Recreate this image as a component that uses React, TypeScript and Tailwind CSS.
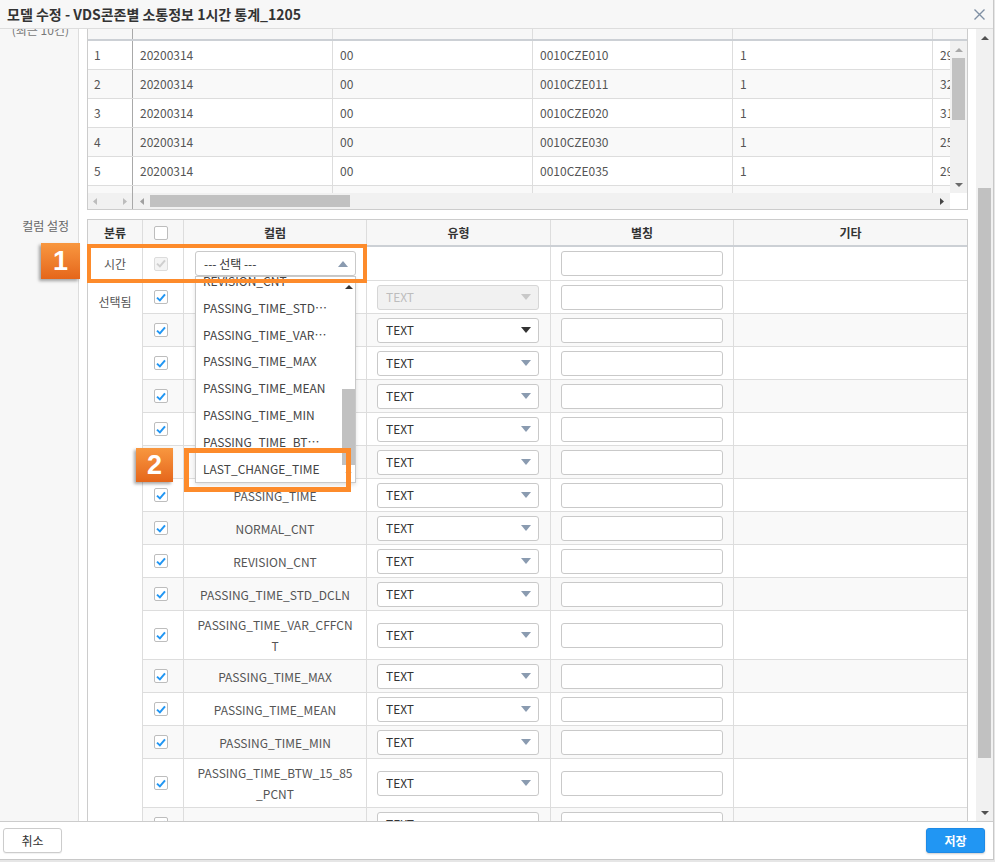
import React from "react";

function Tri({ dir, color, w = 10, h = 6 }: { dir: "up" | "down" | "left" | "right"; color: string; w?: number; h?: number }) {
  let pts = "";
  if (dir === "down") pts = `0,0 ${w},0 ${w / 2},${h}`;
  if (dir === "up") pts = `0,${h} ${w},${h} ${w / 2},0`;
  if (dir === "left") pts = `${w},0 ${w},${h} 0,${h / 2}`;
  if (dir === "right") pts = `0,0 0,${h} ${w},${h / 2}`;
  return (
    <svg width={w} height={h} viewBox={`0 0 ${w} ${h}`} className="block shrink-0">
      <polygon points={pts} fill={color} />
    </svg>
  );
}

function Check({ checked = true, disabled = false }: { checked?: boolean; disabled?: boolean }) {
  return (
    <div
      className={`w-[14px] h-[14px] rounded-[2px] border flex items-center justify-center ${
        disabled ? "border-[#dcdcdc] bg-[#f4f4f4]" : "border-[#bdbdbd] bg-white"
      }`}
    >
      {checked && (
        <svg width="10" height="9" viewBox="0 0 10 9" className="block">
          <path d="M1 4.6 L3.9 7.4 L9 1.4" fill="none" stroke={disabled ? "#cfcfcf" : "#2196f3"} strokeWidth="2" />
        </svg>
      )}
    </div>
  );
}

function TypeSelect({ variant }: { variant: "disabled" | "dark" | "normal" }) {
  const dis = variant === "disabled";
  return (
    <div
      className={`ml-[10px] w-[162px] h-[25px] rounded-[3px] border flex items-center justify-between pl-[8px] pr-[7px] ${
        dis ? "bg-[#f1f1f1] border-[#d6d6d6] text-[#bdbdbd]" : "bg-white border-[#c9c9c9] text-[#333]"
      }`}
    >
      <span>TEXT</span>
      <Tri dir="down" color={dis ? "#c8c8c8" : variant === "dark" ? "#333" : "#8a9bb0"} />
    </div>
  );
}

function Input() {
  return <div className="ml-[10px] w-[162px] h-[25px] rounded-[3px] border border-[#c9c9c9] bg-white" />;
}

const upperRows = [
  ["1", "20200314", "00", "0010CZE010", "1", "2950"],
  ["2", "20200314", "00", "0010CZE011", "1", "3210"],
  ["3", "20200314", "00", "0010CZE020", "1", "3150"],
  ["4", "20200314", "00", "0010CZE030", "1", "2580"],
  ["5", "20200314", "00", "0010CZE035", "1", "2960"],
  ["6", "20200314", "00", "0010CZE040", "1", "2710"],
];

const upperHead = ["순번", "STAT_DATE", "STAT_HOUR", "CONZONE_ID", "ROAD_DRCT_SE_CD_YN", "VOLUME"];

function UpperGrid() {
  return (
    <div className="w-[881px] h-[200px] border border-[#cccccc] bg-white flex flex-col">
      <div className="h-[30px] shrink-0 border-b-2 border-[#ccd0d5] bg-[#f7f7f7] flex overflow-hidden font-bold text-[#333]">
        <div className="w-[45px] shrink-0 border-r border-[#a9a9a9] flex items-center justify-center pb-[6px]">{upperHead[0]}</div>
        {upperHead.slice(1).map((h, i) => (
          <div key={i} className="w-[200px] shrink-0 border-r border-[#dddddd] flex items-center justify-center whitespace-nowrap pb-[6px]">
            {h}
          </div>
        ))}
      </div>
      <div className="h-[152px] shrink-0 flex">
        <div className="w-[862px] shrink-0 overflow-hidden">
          {upperRows.map((r, i) => (
            <div key={i} className={`h-[29px] flex border-b border-[#dddddd] ${i % 2 === 1 ? "bg-[#f9f9f9]" : "bg-white"}`}>
              <div className="w-[45px] shrink-0 border-r border-[#a9a9a9] pl-[6px] flex items-center">{r[0]}</div>
              {r.slice(1).map((c, j) => (
                <div key={j} className="w-[200px] shrink-0 border-r border-[#dddddd] pl-[7px] flex items-center whitespace-nowrap">
                  {c}
                </div>
              ))}
            </div>
          ))}
        </div>
        <div className="w-[17px] shrink-0 bg-[#f1f1f1] flex flex-col">
          <div className="h-[17px] flex items-center justify-center">
            <Tri dir="up" color="#a8a8a8" w={8} h={4} />
          </div>
          <div className="ml-[2px] w-[13px] h-[62px] bg-[#c1c1c1]" />
          <div className="flex-1" />
          <div className="h-[17px] flex items-center justify-center">
            <Tri dir="down" color="#6b6b6b" w={8} h={4} />
          </div>
        </div>
      </div>
      <div className="h-[16px] shrink-0 flex">
        <div className="w-[45px] shrink-0 bg-[#f1f1f1] border-r border-[#a9a9a9] flex items-center justify-between px-[5px]">
          <Tri dir="left" color="#bdbdbd" w={4} h={7} />
          <Tri dir="right" color="#bdbdbd" w={4} h={7} />
        </div>
        <div className="w-[817px] shrink-0 bg-[#f1f1f1] flex items-center">
          <div className="w-[17px] flex items-center justify-center">
            <Tri dir="left" color="#a0a0a0" w={4} h={7} />
          </div>
          <div className="w-[200px] h-[12px] bg-[#c1c1c1]" />
          <div className="flex-1" />
          <div className="w-[17px] flex items-center justify-center">
            <Tri dir="right" color="#444" w={4} h={7} />
          </div>
        </div>
        <div className="w-[17px] shrink-0 bg-white" />
      </div>
    </div>
  );
}

type LRow = { name: string[]; tall?: boolean; type?: "disabled" | "dark" | "normal" };
const lowerRows: LRow[] = [
  { name: ["STAT_DATE"], type: "disabled" },
  { name: ["STAT_HOUR"], type: "dark" },
  { name: ["VDS_ZONE_ID"] },
  { name: ["LANE_NO"] },
  { name: ["TRAFFIC_QTY"] },
  { name: ["AVG_SPEED"] },
  { name: ["PASSING_TIME"] },
  { name: ["NORMAL_CNT"] },
  { name: ["REVISION_CNT"] },
  { name: ["PASSING_TIME_STD_DCLN"] },
  { name: ["PASSING_TIME_VAR_CFFCN", "T"], tall: true },
  { name: ["PASSING_TIME_MAX"] },
  { name: ["PASSING_TIME_MEAN"] },
  { name: ["PASSING_TIME_MIN"] },
  { name: ["PASSING_TIME_BTW_15_85", "_PCNT"], tall: true },
  { name: ["LAST_CHANGE_TIME"] },
  { name: ["STAT_WEEK"] },
];

const listItems = [
  "REVISION_CNT",
  "PASSING_TIME_STD_DCLN",
  "PASSING_TIME_VAR_CFFCNT",
  "PASSING_TIME_MAX",
  "PASSING_TIME_MEAN",
  "PASSING_TIME_MIN",
  "PASSING_TIME_BTW_15_85_PCNT",
  "LAST_CHANGE_TIME",
];

function OpenSelect() {
  return (
    <div className="relative ml-[11px] w-[161px] h-[25px]">
      <div className="h-full border border-[#c9c9c9] rounded-[3px] bg-white flex items-center justify-between pl-[8px] pr-[7px] text-[#333]">
        <span>--- 선택 ---</span>
        <Tri dir="up" color="#8a9bb0" />
      </div>
      <div className="absolute left-0 top-full w-[161px] h-[207px] border border-[#c9c9c9] bg-white z-10 overflow-hidden shadow-[0_2px_4px_rgba(0,0,0,0.12)]">
        <div className="-mt-[9px] pr-[13px]">
          {listItems.map((t, i) => (
            <div key={i} className="h-[26.8px] leading-[26.8px] pl-[7px] pr-[13px] truncate text-[#444]">
              {t}
            </div>
          ))}
        </div>
        <div className="absolute right-0 top-0 bottom-0 w-[13px] flex flex-col items-center bg-white">
          <div className="h-[19px] flex items-center justify-center">
            <Tri dir="up" color="#333" w={8} h={4} />
          </div>
          <div className="mt-[93px] w-[13px] h-[76px] bg-[#c1c1c1]" />
          <div className="flex-1 flex items-center justify-center">
            <Tri dir="down" color="#c8c8c8" w={7} h={4} />
          </div>
        </div>
      </div>
    </div>
  );
}

function LowerGrid() {
  return (
    <div className="w-[881px] border border-[#cccccc] bg-white">
      <div className="h-[27px] border-b-2 border-[#ccd0d5] bg-[#f7f7f7] flex font-bold text-[#333]">
        <div className="w-[55px] shrink-0 border-r border-[#dddddd] flex items-center justify-center">분류</div>
        <div className="w-[41px] shrink-0 border-r border-[#dddddd] flex items-center pl-[11px]">
          <Check checked={false} />
        </div>
        <div className="w-[183px] shrink-0 border-r border-[#dddddd] flex items-center justify-center">컬럼</div>
        <div className="w-[184px] shrink-0 border-r border-[#dddddd] flex items-center justify-center">유형</div>
        <div className="w-[183px] shrink-0 border-r border-[#dddddd] flex items-center justify-center">별칭</div>
        <div className="flex-1 flex items-center justify-center">기타</div>
      </div>
      <div className="h-[34px] border-b border-[#dddddd] flex">
        <div className="w-[55px] shrink-0 border-r border-[#dddddd] flex items-center justify-center">시간</div>
        <div className="w-[41px] shrink-0 border-r border-[#dddddd] flex items-center pl-[11px]">
          <Check disabled />
        </div>
        <div className="w-[183px] shrink-0 border-r border-[#dddddd] pt-[4px]">
          <OpenSelect />
        </div>
        <div className="w-[184px] shrink-0 border-r border-[#dddddd]" />
        <div className="w-[183px] shrink-0 border-r border-[#dddddd] pt-[4px]">
          <Input />
        </div>
        <div className="flex-1" />
      </div>
      <div className="flex">
        <div className="w-[55px] shrink-0 border-r border-[#dddddd] text-center pt-[10px] leading-[21px]">선택됨</div>
        <div className="flex-1">
          {lowerRows.map((r, i) => (
            <div
              key={i}
              className={`flex border-b border-[#dddddd] ${r.tall ? "h-[49px]" : "h-[33px]"} ${
                i % 2 === 1 ? "bg-[#f9f9f9]" : "bg-white"
              }`}
            >
              <div className="w-[41px] shrink-0 border-r border-[#dddddd] flex items-center pl-[11px]">
                <Check />
              </div>
              <div className="w-[183px] shrink-0 border-r border-[#dddddd] flex flex-col items-center justify-center leading-[21px] whitespace-nowrap">
                {r.name.map((n, j) => (
                  <div key={j}>{n}</div>
                ))}
              </div>
              <div className="w-[184px] shrink-0 border-r border-[#dddddd] flex items-center">
                <TypeSelect variant={r.type ?? "normal"} />
              </div>
              <div className="w-[183px] shrink-0 border-r border-[#dddddd] flex items-center">
                <Input />
              </div>
              <div className="flex-1" />
            </div>
          ))}
        </div>
      </div>
    </div>
  );
}

export default function App() {
  return (
    <div className="relative w-[995px] h-[862px] bg-[#e6e6e6] overflow-hidden font-['Noto_Sans_CJK_KR',sans-serif] text-[12px] text-[#555]">
      <div className="w-[994px] h-[860px] bg-white border-r border-b border-[#c8c8c8] flex flex-col">
        {/* title bar */}
        <div className="h-[29px] shrink-0 bg-[#f7f7f7] border-b border-[#dddddd] flex items-center justify-between pl-[7px] pr-[8px]">
          <span className="text-[14px] font-bold text-[#333] leading-none">모델 수정 - VDS콘존별 소통정보 1시간 통계_1205</span>
          <svg width="11" height="11" viewBox="0 0 11 11" className="block">
            <path d="M0.5 0.5 L10.5 10.5 M10.5 0.5 L0.5 10.5" stroke="#7f90a4" strokeWidth="1.4" fill="none" />
          </svg>
        </div>

        {/* body */}
        <div className="h-[792px] shrink-0 flex overflow-hidden">
          <div className="w-[976px] shrink-0 overflow-hidden">
            <div className="-mt-[29px]">
              <div className="flex">
                <div className="w-[79px] shrink-0 bg-[#f7f7f7] border-r border-[#dddddd] text-right pr-[9px] pt-[6px] leading-[16px] text-[#777]">
                  <div>미리보기</div>
                  <div>(최근 10건)</div>
                </div>
                <div className="pl-[8px] pt-[10px]">
                  <UpperGrid />
                </div>
              </div>
              <div className="flex">
                <div className="w-[79px] shrink-0 bg-[#f7f7f7] border-r border-[#dddddd] text-right pr-[9px] pt-[8px] leading-[16px] text-[#666]">
                  컬럼 설정
                </div>
                <div className="pl-[8px] pt-[9px]">
                  <LowerGrid />
                </div>
              </div>
            </div>
          </div>
          {/* modal scrollbar */}
          <div className="w-[17px] shrink-0 bg-[#f1f1f1] flex flex-col">
            <div className="h-[17px] flex items-center justify-center">
              <Tri dir="up" color="#505050" w={8} h={4} />
            </div>
            <div className="mt-[142px] ml-[2px] w-[13px] h-[570px] bg-[#c1c1c1]" />
            <div className="flex-1" />
            <div className="h-[17px] flex items-center justify-center">
              <Tri dir="down" color="#505050" w={8} h={4} />
            </div>
          </div>
        </div>

        {/* footer */}
        <div className="h-[38px] shrink-0 border-t border-[#cccccc] bg-white flex items-center justify-between pl-[3px] pr-[8px]">
          <button className="w-[59px] h-[25px] rounded-[3px] border border-[#cccccc] bg-white text-[#333] text-[12px] shadow-[0_1px_1px_rgba(0,0,0,0.06)]">
            취소
          </button>
          <button className="w-[59px] h-[25px] rounded-[3px] border border-[#1e8ae6] bg-[#2196f3] text-white font-bold text-[12px] shadow-[0_1px_2px_rgba(0,0,0,0.2)]">
            저장
          </button>
        </div>
      </div>

      {/* annotation overlays */}
      <div className="absolute left-[87px] top-[244px] w-[280px] h-[39px] border-4 border-[#fd8b2b] z-20" />
      <div className="absolute left-[184px] top-[448px] w-[167px] h-[44px] border-[5px] border-[#fd8b2b] z-20" />
      <div className="absolute left-[41px] top-[243px] w-[39px] h-[36px] bg-linear-to-b from-[#f8973f] to-[#e5661a] shadow-[-2px_2px_3px_rgba(0,0,0,0.35)] flex items-center justify-center text-white font-bold text-[27px] font-['Liberation_Sans',sans-serif] z-30">
        1
      </div>
      <div className="absolute left-[136px] top-[448px] w-[37px] h-[34px] bg-linear-to-b from-[#f8973f] to-[#e5661a] shadow-[-2px_2px_3px_rgba(0,0,0,0.35)] flex items-center justify-center text-white font-bold text-[27px] font-['Liberation_Sans',sans-serif] z-30">
        2
      </div>
    </div>
  );
}
